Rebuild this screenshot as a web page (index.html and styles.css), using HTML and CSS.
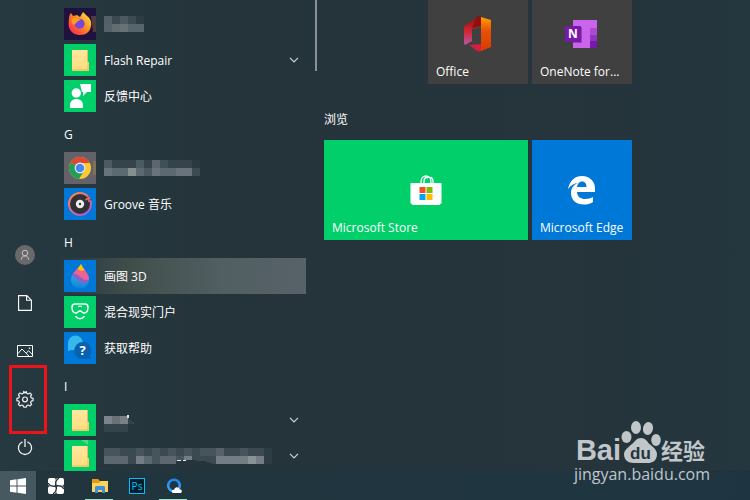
FILE: index.html
```html
<!DOCTYPE html>
<html lang="zh-CN">
<head>
<meta charset="utf-8">
<title>开始</title>
<link rel="stylesheet" href="styles.css">
</head>
<body>
<svg width="0" height="0" class="defs" aria-hidden="true">
  <defs>
    <linearGradient id="fx" x1="1" y1="0" x2="0" y2="1"><stop offset="0" stop-color="#fff14a"/><stop offset=".4" stop-color="#ff9a1f"/><stop offset=".75" stop-color="#ff4a3c"/><stop offset="1" stop-color="#e9197e"/></linearGradient>
    <linearGradient id="fold" x1="0" y1="0" x2="0" y2="1"><stop offset="0" stop-color="#ffe79c"/><stop offset="1" stop-color="#ffdc81"/></linearGradient>
    <linearGradient id="ring" x1="0" y1="0" x2=".6" y2="1"><stop offset="0" stop-color="#ff8a3c"/><stop offset=".5" stop-color="#e0708a"/><stop offset="1" stop-color="#9d62d8"/></linearGradient>
    <linearGradient id="drop" x1="0" y1="0" x2="0" y2="1"><stop offset="0" stop-color="#35c3f3"/><stop offset="1" stop-color="#1586d8"/></linearGradient>
    <linearGradient id="offL" x1="0" y1="0" x2="0" y2="1"><stop offset="0" stop-color="#8c1010"/><stop offset=".5" stop-color="#cf2630"/><stop offset="1" stop-color="#b957a8"/></linearGradient>
    <linearGradient id="offR" x1="0" y1="0" x2="0" y2="1"><stop offset="0" stop-color="#ffa000"/><stop offset=".4" stop-color="#e65208"/><stop offset="1" stop-color="#d83b01"/></linearGradient>
    <linearGradient id="q" x1="0" y1="0" x2="0" y2="1"><stop offset="0" stop-color="#1c86f5"/><stop offset="1" stop-color="#39a9f8"/></linearGradient>
    <g id="folder"><rect width="32" height="32" fill="#00cf6a"/><path d="M8 6h16v21H8z" fill="#e5bd5b"/><path d="M8 6h15v12l2 1v8H8z" fill="url(#fold)"/><path d="M24 18h1v8l-2 1v-6z" fill="#f9cb5c"/><path d="M8 26h17" stroke="#e3b852" fill="none"/></g>
  </defs>
</svg>
<div class="desktop">
  <main class="menu">
    <nav class="rail" aria-label="系统">
      <button type="button" aria-label="账户"><svg width="20" height="20" viewBox="0 0 20 20"><circle cx="10" cy="10" r="10" fill="#696969"/><g fill="none" stroke="#c4c4c4"><circle cx="10" cy="8" r="2.8"/><path d="M6.3 14.7c.4-5 7-5 7.4 0"/></g></svg></button>
      <button type="button" aria-label="文档"><svg width="14" height="16" viewBox="0 0 14 16"><path d="M.6.6h8.2l4.6 4.6v10.2H.6zM8.6.8v4.4h4.6" fill="none" stroke="#fff" stroke-width="1.1"/></svg></button>
      <button type="button" aria-label="图片"><svg width="16" height="12" viewBox="0 0 16 12"><path d="M.5.5h15v11H.5zM.8 8.8 5 4l6.8 7M9.2 8.1l2.4-2.3 4 4" fill="none" stroke="#fff"/><circle cx="12.5" cy="3.3" r=".8" fill="#fff"/></svg></button>
      <button type="button" class="marked" aria-label="设置"><svg width="18" height="18" viewBox="0 0 18 18" fill="none" stroke="#eee" stroke-width="1.2"><path d="m7.700 1.500-.5 1.900-1.400.6-1.800-1-1.600 1.600 1 1.800-.6 1.400-1.900.5v2.400l1.900.5.6 1.400-1 1.800L4 16l1.800-1 1.400.6.5 1.500h2.600l.5-1.500 1.400-.6 1.800 1 1.600-1.600-1-1.800.6-1.400 1.900-.5V8.300l-1.900-.5-.6-1.400 1-1.800L14 3l-1.800 1-1.400-.6-.5-1.900L9 3z" stroke-linejoin="round"/><circle cx="9" cy="9.400" r="2.400"/></svg></button>
      <button type="button" aria-label="电源"><svg width="16" height="18" viewBox="0 0 16 18" fill="none" stroke="#eee" stroke-width="1.3"><path d="M5.5 3.8a6.6 6.6 0 1 0 5 0M8 1v8"/></svg></button>
    </nav>

    <div class="apps">
      <button type="button" class="app">
        <svg class="icon" viewBox="0 0 32 32"><rect width="32" height="32" fill="#20123f"/><path d="M27 8h5v16h-3z" fill="#523b3c"/><path d="M5 11c0-3 1-5 2-6l2 3 4-1 3 2 3-5 4 4c3 2 5 6 4 10-1 6-5 9-11 9C8 27 3 21 5 11z" fill="url(#fx)"/><circle cx="15.6" cy="15.8" r="5" fill="#7548dc"/><path d="M8 11c3-2 7-1 9 1-2 0-3 1-5 3l-2 2c-2-1-3-3-2-6z" fill="#ff9b25"/></svg>
        <svg width="40" height="16" viewBox="0 0 40 16" shape-rendering="crispEdges"><rect width="8" height="8" fill="#526068"/><rect x="8" width="8" height="8" fill="#3b4950"/><rect x="16" width="8" height="8" fill="#4b5a60"/><rect x="24" width="8" height="8" fill="#3c4b52"/><rect x="32" width="8" height="8" fill="#2d3c43"/><rect y="8" width="8" height="8" fill="#566268"/><rect x="8" y="8" width="8" height="8" fill="#616d70"/><rect x="16" y="8" width="8" height="8" fill="#687276"/><rect x="24" y="8" width="16" height="8" fill="#57646b"/></svg>
      </button>
      <button type="button" class="app"><svg class="icon" viewBox="0 0 32 32"><use href="#folder"/></svg><span>Flash Repair</span><svg class="chevron" viewBox="0 0 10 6"><path d="m1 .8 4 4 4-4"/></svg></button>
      <button type="button" class="app"><svg class="icon" viewBox="0 0 32 32"><rect width="32" height="32" fill="#00cf6a"/><g fill="#fff"><circle cx="12.3" cy="13" r="4.7"/><path d="M6 28v-3c0-8 13-8 13 0v3zM16 4h11v8h-4l-4 4v-4h-1z"/></g></svg><span>反馈中心</span></button>
      <h2 class="letter">G</h2>
      <button type="button" class="app">
        <svg class="icon" viewBox="0 0 32 32"><rect width="32" height="32" fill="#626268"/><path d="M29 9h3v14h-3z" fill="#80705a"/><circle cx="16" cy="16" r="11" fill="#fcc934"/><path d="M16 16 6.5 10.5A11 11 0 0 1 25.8 11H16z" fill="#df4635"/><path d="M16 16 6.5 10.5A11 11 0 0 0 15 27l5.3-8.7z" fill="#229c58"/><circle cx="16" cy="16" r="5.4" fill="#eef3f5"/><circle cx="16" cy="16" r="4.3" fill="#4688ee"/></svg>
        <svg width="96" height="16" viewBox="0 0 96 16" shape-rendering="crispEdges"><path d="M0 0h96v16H0z" fill="#35444b"/><path d="M0 0h8v8H0zM32 0h8v8h-8z" fill="#4c5a61"/><path d="M48 0h8v8h-8z" fill="#5a676c"/><path d="M56 0h8v8h-8z" fill="#405057"/><path d="M88 0h8v8h-8z" fill="#2a393f"/><path d="M0 8h8v8H0zM48 8h8v8h-8zM72 8h16v8H72z" fill="#69737a"/><path d="M8 8h16v8H8zM32 8h8v8h-8zM56 8h16v8H56z" fill="#5d6970"/><path d="M24 8h8v8h-8z" fill="#868e8e"/><path d="M40 8h8v8h-8z" fill="#4b5960"/><path d="M88 8h8v8h-8z" fill="#3c4a51"/></svg>
      </button>
      <button type="button" class="app"><svg class="icon" viewBox="0 0 32 32"><rect width="32" height="32" fill="#0078d7"/><circle cx="16" cy="16" r="11" fill="#313135" stroke="url(#ring)" stroke-width="2"/><path d="m20 12 5-4 2 4-3 2" fill="#313135"/><path d="m21.5 12 3.5-2.5V14" fill="none" stroke="#e56c6f" stroke-width="1.6"/><circle cx="16" cy="16" r="4.2" fill="#ededed"/><circle cx="16" cy="16" r="1.2" fill="#333"/></svg><span>Groove 音乐</span></button>
      <h2 class="letter">H</h2>
      <button type="button" class="app active"><svg class="icon" viewBox="0 0 32 32"><rect width="32" height="32" fill="#0078d7"/><path d="M17 4C13 10 7 14 7 20c0 5 4 8 9 8s9-3 9-8c0-6-5-10-8-16z" fill="url(#drop)"/><path d="M17 4c-4 6-8 8-9.5 12 5 1 6 6 11 7 3 .6 5.600-.2 6.400-2C26 14 20 10 17 4z" fill="#8a62c7"/><path d="M14 8c-2 3-4 4-5 6 4-1 7 3 10 5 2 1 4 1 6 .6C25 15 22 12 20 9z" fill="#ef6291"/><path d="m17 4-3.500 5c2 1 3 2 5 1.800l2-.8C19 8 18 6 17 4z" fill="#ffc400"/></svg><span>画图 3D</span></button>
      <button type="button" class="app"><svg class="icon" viewBox="0 0 32 32"><rect width="32" height="32" fill="#00cf6a"/><path d="M8 11c0-2 1-3 3-3h10c2 0 3 1 3 3 0 4-1 6-4 6-2 0-2-2-4-2s-2 2-4 2c-3 0-4-2-4-6zM11.5 20c2 3.6 7 3.6 9 0" fill="none" stroke="#fff" stroke-width="1.4"/><path d="M14 10.3h4" stroke="#fff"/></svg><span>混合现实门户</span></button>
      <button type="button" class="app"><svg class="icon" viewBox="0 0 32 32"><rect width="32" height="32" fill="#0078d7"/><path d="M4 19V11a7.500 7.500 0 0 1 15 0v5l-6 2H7z" fill="#35b9ed"/><path d="M18.500 10a8.500 8.500 0 1 0 2 16.800h6.500l-1.500-3A8.500 8.500 0 0 0 18.500 10z" fill="#0862af"/><text x="18.500" y="23" class="question">?</text></svg><span>获取帮助</span></button>
      <h2 class="letter">I</h2>
      <button type="button" class="app"><svg class="icon" viewBox="0 0 32 32"><use href="#folder"/></svg><svg width="32" height="24" viewBox="0 0 32 24"><g shape-rendering="crispEdges"><path d="M0 8h8v8H0z" fill="#7c8489"/><path d="M8 8h8v8H8z" fill="#697279"/><path d="M16 8h8v8h-8z" fill="#798187"/><path d="M0 16h24v8H0z" fill="#35434a"/></g><path d="m24 10 8 6h-8z" fill="#35434a"/><path d="M23 7h2v3h-2z" fill="#e2e5e6"/></svg><svg class="chevron" viewBox="0 0 10 6"><path d="m1 .8 4 4 4-4"/></svg></button>
      <button type="button" class="app"><svg class="icon" viewBox="0 0 32 32"><use href="#folder"/><path d="M17 0h7v5z" fill="#4bda80"/></svg>
        <svg width="168" height="16" viewBox="0 0 168 16" shape-rendering="crispEdges"><path d="M0 0h168v16H0z" fill="#3b4950"/><path d="M0 0h16v8H0zM32 0h8v8h-8zM48 0h8v8h-8zM64 0h8v8h-8zM80 0h8v8h-8zM96 0h16v8H96zM136 0h8v8h-8z" fill="#46545b"/><path d="M112 0h8v8h-8z" fill="#566269"/><path d="M160 0h8v16h-8z" fill="#2e3c43"/><path d="M0 8h24v8H0zM40 8h8v8h-8zM56 8h16v8H56z" fill="#5c686e"/><path d="M32 8h8v8h-8zM80 8h8v8h-8zM112 8h48v8h-48z" fill="#747d83"/><path d="M48 8h8v8h-8zM72 8h8v8h-8z" fill="#46545b"/><path d="M144 8h8v8h-8z" fill="#899296"/><path d="m72 13 12-1 16 1 10 3H72z" fill="#26343b"/><path d="M73 12h4v1h-4zM79 12h3v1h-3z" fill="#e8eaeb"/></svg><svg class="chevron" viewBox="0 0 10 6"><path d="m1 .8 4 4 4-4"/></svg></button>
    </div>

    <div class="thumb"></div>

    <div class="tiles">
      <section class="group first">
        <button type="button" class="tile grey second"><svg width="28" height="36" viewBox="0 0 28 36"><path d="M0 10 14 1l4 1v8l-10 3v12l-7 4-1-2z" fill="url(#offL)"/><path d="m5 29 13-1v7l-4 .5z" fill="#d41f3e"/><path d="m13.500 0 4 .4v9L8 12z" fill="#8c1010"/><path d="m17 1 10 3v27l-10 4z" fill="url(#offR)"/></svg><span>Office</span></button>
        <button type="button" class="tile grey"><svg width="34" height="30" viewBox="0 0 34 30"><path d="M8 1h24v28H8z" fill="#ca64ea"/><path d="M25 9h7v7h-7z" fill="#ae4bd5"/><path d="M25 16h7v6h-7z" fill="#9332bf"/><path d="M25 22h7v7h-7z" fill="#7719aa"/><path d="M8 8h9v16H8z" fill="#9a3cbd"/><rect y="7" width="16" height="16" rx="1" fill="#7719aa"/><text x="8" y="19" class="note">N</text></svg><span>OneNote for...</span></button>
      </section>
      <h2 class="title">浏览</h2>
      <section class="group">
        <button type="button" class="tile green wide"><svg width="32" height="32" viewBox="0 0 32 32"><path d="M11 10V8c0-8 10-8 10 0v2M14 9V7c0-5 9-5 9 0v3" fill="none" stroke="#fff" stroke-width="1.300"/><path d="M.5 9h31v20l-2 2h-27l-2-2z" fill="#fff"/><path d="M9.500 13h6v6h-6z" fill="#f25022"/><path d="M16.500 13h6v6h-6z" fill="#7fba00"/><path d="M9.500 20h6v6h-6z" fill="#00a4ef"/><path d="M16.500 20h6v6h-6z" fill="#ffb900"/></svg><span>Microsoft Store</span></button>
        <button type="button" class="tile blue"><svg width="28" height="30" viewBox="0 0 28 30"><path d="M0 14C2 5 7 1 14 1c8 0 13 6 13 12v4H9c.3 5 4 7 8 7 3 0 6-1 8-2v5c-3 2-6 2.500-9 2.500C8 29.500 3 25 3 18c0-4 2-8 7-10-4 .5-7 2-10 6zm9-2h9.500c0-4-2-5.500-4.500-5.500-3 0-4.500 2.500-5 5.500z" fill="#fff"/></svg><span>Microsoft Edge</span></button>
      </section>
    </div>
  </main>

  <footer class="taskbar">
    <button type="button" class="start" aria-label="开始"><svg width="16" height="16" viewBox="0 0 16 16"><path d="m0 2.300 6.500-1v6.200H0zM7.500 1.200 16 0v7.500H7.500zM0 8.500h6.500v6.200l-6.500-1zM7.500 8.500H16V16l-8.500-1.200z" fill="#fff"/></svg></button>
    <button type="button" aria-label="任务"><svg width="16" height="16" viewBox="0 0 16 16"><rect width="7.800" height="7.800" rx="2" fill="#fff"/><rect x="8.200" width="7.800" height="7.800" rx="2" fill="#fff"/><rect y="8.200" width="7.800" height="7.800" rx="2" fill="#fff"/><rect x="8.200" y="8.200" width="7.800" height="7.800" rx="2" fill="#fff"/><path d="M8 8C5 9 2 8 0 5M8 8C7 5 8 2 11 0M8 8c3-1 6 0 8 3M8 8c1 3 0 6-3 8" fill="none" stroke="#22343c" stroke-width="1.200"/></svg></button>
    <button type="button" class="open gap" aria-label="文件资源管理器"><svg width="16" height="14" viewBox="0 0 16 14"><path d="M0 0h6l2 2h8v4H0z" fill="#e09c12"/><path d="M0 4h7l2-2h7v11H0z" fill="#ffd35b"/><path d="M3 14V8l1-1h8l1 1v6h-3v-3H6v3z" fill="#3b91dc"/></svg></button>
    <button type="button" aria-label="Photoshop"><svg width="16" height="16" viewBox="0 0 16 16"><rect x=".5" y=".5" width="15" height="15" fill="#001d2c" stroke="#00c1f8"/><text x="8" y="11.500" class="ps">Ps</text></svg></button>
    <button type="button" class="open" aria-label="浏览器"><svg width="16" height="16" viewBox="0 0 16 16"><circle cx="8" cy="7.500" r="5.800" fill="none" stroke="url(#q)" stroke-width="2.600"/><path d="M7.500 15c-3-.5-1.500-4 .5-3 1-4 5-3 5.500-.8 3 0 3 3.600.5 3.800z" fill="#fff"/></svg></button>
  </footer>

  <div class="watermark">
    <div class="brand"><span class="bai">Bai</span><svg width="40" height="42" viewBox="0 0 40 42"><g fill="#c0c6ca"><ellipse cx="5.500" cy="16" rx="5" ry="6"/><ellipse cx="15" cy="6.500" rx="5" ry="6.500"/><ellipse cx="27" cy="7.500" rx="5" ry="6.500" transform="rotate(12 27 7.500)"/><ellipse cx="35" cy="19" rx="4.800" ry="6"/><path d="M14 20c3-4 9-4 12 0 2 4 10 7 10 13 0 7-5 9-9 9H13c-6 0-10-3-10-9 0-5 8-9 11-13z"/></g><text x="19.500" y="38" class="du">du</text></svg><span class="jing">经验</span></div>
    <div class="url">jingyan.baidu.com</div>
  </div>
</div>
</body>
</html>
```
FILE: styles.css
```css
* {
  box-sizing: border-box;
}

body {
  margin: 0;
  color: #fff;
  font: 12px/16px "Open Sans", "Noto Sans CJK SC", sans-serif;
}

button {
  padding: 0;
  border: 0;
  background: none;
  color: inherit;
  font: inherit;
  text-align: left;
}

svg {
  display: block;
  flex: none;
}

.defs {
  position: absolute;
}

.desktop {
  position: relative;
  display: flex;
  flex-direction: column;
  height: 100vh;
  overflow: hidden;
  background: linear-gradient(90deg, #263940, #25333a 35%, #26343b 75%, #24363e);
}

.menu {
  flex: 1;
  min-height: 0;
  display: grid;
  grid-template-columns: 50px 256px 18px 1fr;
  overflow: hidden;
}

.rail {
  display: flex;
  flex-direction: column;
  justify-content: flex-end;
}

.rail button {
  position: relative;
  display: grid;
  place-items: center;
  height: 48px;
}

.marked::after {
  content: "";
  position: absolute;
  inset: -10px 3px -11px 9px;
  border: 3px solid #ee1219;
}

.apps {
  display: flex;
  flex-direction: column;
  min-height: 0;
  padding: 6px 0 0 10px;
}

.app {
  display: flex;
  flex: none;
  align-items: center;
  gap: 8px;
  height: 36px;
  padding: 0 7px 0 4px;
}

.app span {
  padding-top: 2px;
}

.active {
  background: linear-gradient(90deg, #283840, #414f4b 30%, #515e62 65%, #566267);
}

.icon {
  width: 32px;
  height: 32px;
}

.chevron {
  width: 10px;
  height: 6px;
  margin-left: auto;
  fill: none;
  stroke: #d0d4d6;
  stroke-width: 1.2;
}

.letter {
  flex: none;
  height: 36px;
  margin: 0;
  padding: 13px 4px 0;
  font-size: 12px;
  line-height: 16px;
  font-weight: 400;
}

.thumb {
  width: 2px;
  height: 71px;
  margin-left: 9px;
  background: #899195;
}

.group {
  display: grid;
  grid-template-columns: repeat(3, 100px);
  grid-auto-rows: 100px;
  gap: 4px;
}

.first {
  margin-top: -16px;
}

.title {
  margin: 0;
  padding: 28px 0 12px;
  font-size: 12px;
  line-height: 16px;
  font-weight: 400;
}

.tile {
  display: grid;
  grid-template-rows: 1fr 16px;
  justify-items: center;
  align-items: center;
  padding: 20px 8px 4px;
}

.tile span {
  justify-self: start;
  white-space: nowrap;
}

.second {
  grid-column: 2;
}

.wide {
  grid-column: span 2;
}

.grey {
  background: #404040;
}

.green {
  background: #00cf6a;
}

.blue {
  background: #0078d7;
}

.taskbar {
  flex: none;
  display: flex;
  height: 29px;
  background: linear-gradient(90deg, #22353d, #20353f 50%, #1e3541);
}

.taskbar button {
  display: grid;
  place-items: center;
  width: 37px;
}

.taskbar .start {
  width: 36px;
  margin-right: 1px;
  background: #465960;
}

.taskbar .gap {
  margin-left: 7px;
}

.open {
  position: relative;
}

.open::after {
  content: "";
  position: absolute;
  inset: auto 5px 0 4px;
  height: 1px;
  background: #9be8cb;
}

.question,
.note,
.ps,
.du {
  font-family: "Open Sans", sans-serif;
  font-weight: 700;
  text-anchor: middle;
}

.question {
  fill: #fff;
  font-size: 13px;
}

.note {
  fill: #fff;
  font-size: 12px;
}

.ps {
  fill: #00c1f8;
  font-size: 10px;
  font-weight: 400;
}

.du {
  fill: #26343b;
  font-size: 17px;
  font-family: "Liberation Sans", sans-serif;
}

.watermark {
  position: absolute;
  right: 40px;
  bottom: 15px;
  color: #c0c6ca;
}

.brand {
  display: flex;
  align-items: flex-end;
  padding-left: 2px;
}

.bai {
  height: 31px;
  font: 700 29px/36px "Liberation Sans", sans-serif;
}

.jing {
  height: 25px;
  font: 700 22px/22px "Noto Sans CJK SC", sans-serif;
}

.url {
  font-size: 16px;
  line-height: 22px;
}
```
